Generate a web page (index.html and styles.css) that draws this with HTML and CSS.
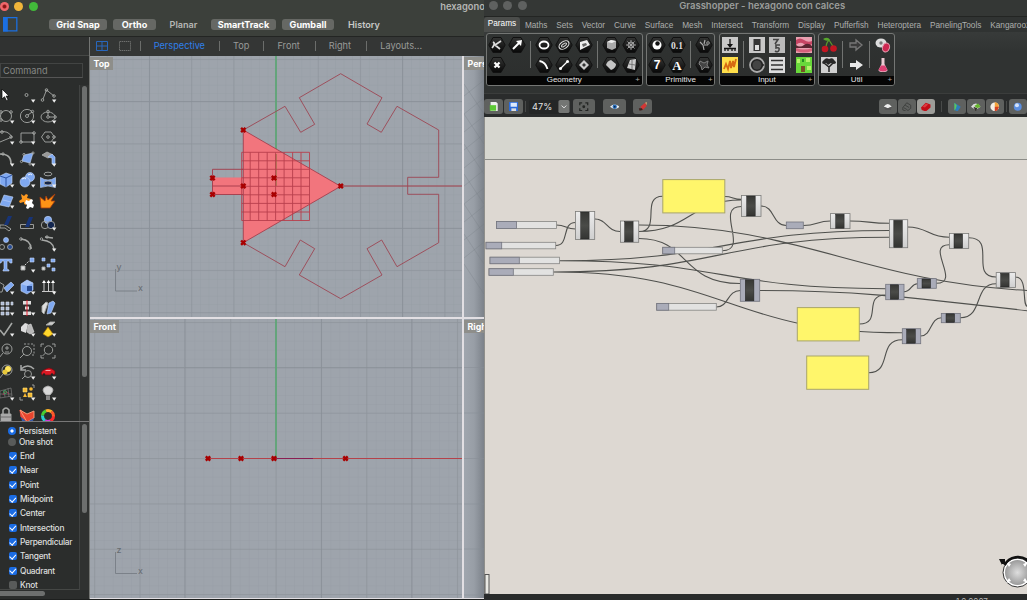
FILE: index.html
```
<!DOCTYPE html>
<html lang="en">
<head>
<meta charset="utf-8">
<title>hexagono con calces</title>
<link rel="stylesheet" href="styles.css">
</head>
<body>
<svg class="defs" width="0" height="0">
  <defs>
    <symbol id="fly" viewBox="0 0 22 21"><path d="M15 14.6h4.4l-2.2 3.2z" fill="#eee" stroke="none"/></symbol>
    <symbol id="x" viewBox="-4 -4 8 8"><path d="M-2.2-2.2 2.2 2.2M2.2-2.2-2.2 2.2" stroke="#a80000" stroke-width="2.4"/></symbol>
    <linearGradient id="hexfill" x1="0" y1="0" x2="0" y2="1"><stop offset="0" stop-color="#343534"/><stop offset="1" stop-color="#080808"/></linearGradient>
    <symbol id="hex" viewBox="0 0 20 20"><path d="M6 2.5h8l4.2 7.5-4.2 7.5H6L1.8 10z" fill="url(#hexfill)" stroke="#111" stroke-width="1"/></symbol>
    <pattern id="minorT" x="276" y="186" width="8.44" height="8.44" patternUnits="userSpaceOnUse"><path d="M0 0H9M0 0V9" stroke="#8b929a" stroke-width=".7" opacity=".5"/></pattern>
    <pattern id="majorT" x="275.5" y="185.5" width="42.2" height="42.2" patternUnits="userSpaceOnUse"><path d="M0 .5H43M.5 0V43" stroke="#878d95" stroke-width=".8" opacity=".6"/></pattern>
    <pattern id="minorF" x="276" y="458.5" width="9.07" height="9.07" patternUnits="userSpaceOnUse"><path d="M0 0H10M0 0V10" stroke="#8b929a" stroke-width=".7" opacity=".5"/></pattern>
    <pattern id="majorF" x="275.5" y="458" width="45.35" height="45.35" patternUnits="userSpaceOnUse"><path d="M0 .5H46M.5 0V46" stroke="#878d95" stroke-width=".8" opacity=".6"/></pattern>
    <linearGradient id="side"><stop offset="0" stop-color="#a0a6ae"/><stop offset=".5" stop-color="#989ea6"/><stop offset="1" stop-color="#7c828a"/></linearGradient>
    <linearGradient id="comp" x1="0" y1="0" x2="0" y2="1"><stop offset="0" stop-color="#ececec"/><stop offset="1" stop-color="#cfcfcf"/></linearGradient>
    <linearGradient id="core" x1="0" y1="0" x2="0" y2="1"><stop offset="0" stop-color="#373835"/><stop offset=".5" stop-color="#4a4b48"/><stop offset="1" stop-color="#333432"/></linearGradient>
    <radialGradient id="ball"><stop offset="0" stop-color="#dedede"/><stop offset="1" stop-color="#9a9a9a"/></radialGradient>
  </defs>
</svg>
<div class="screen">
  <section class="rhino">
    <header class="rhino-head">
      <div class="titlebar">
        <i class="light red"></i><i class="light yellow"></i><i class="light green"></i>
        <span class="doc-title">hexagono con calces</span>
      </div>
      <div class="snapbar">
        <svg class="panel-toggle" viewBox="0 0 15 15"><path d="M.7.7h13.6v13.6H.7z" fill="none" stroke="#1b6fe0" stroke-width="1.3"/><path d="M0 0h5v15H0z" fill="#1b6fe0"/></svg>
        <span class="snap on w58">Grid Snap</span><span class="snap on w43">Ortho</span><span class="snap w43">Planar</span><span class="snap on w65">SmartTrack</span><span class="snap on w52">Gumball</span><span class="snap w48 bright">History</span>
      </div>
    </header>
    <div class="rhino-body">
      <aside class="sidebar">
        <div class="side-top"></div>
        <div class="command">Command</div>
        <div class="tools-wrap">
          <div class="tools">
            <svg viewBox="0 0 22 21"><path d="M7 4v10l2.500-2.300 2 4 1.600-.8-2-3.800H14z" fill="#fff" stroke="#000" stroke-width=".7"/></svg>
            <svg viewBox="0 0 22 21"><circle cx="10.500" cy="10" r="1.500"/><use href="#fly"/></svg>
            <svg viewBox="0 0 22 21"><path d="M6 14 9.500 5 17 11"/><circle cx="5.500" cy="15" r="1.300"/><circle cx="9.500" cy="5" r="1.300"/><circle cx="17" cy="11" r="1.300"/><use href="#fly"/></svg>

            <svg viewBox="0 0 22 21"><circle cx="11" cy="10" r="5.500"/><circle cx="6" cy="6" r="1.300"/><circle cx="16" cy="6" r="1.300"/><circle cx="6" cy="14" r="1.300"/><use href="#fly"/></svg>
            <svg viewBox="0 0 22 21"><circle cx="11" cy="10" r="6.600"/><circle cx="11" cy="10" r="1.500"/><path d="m12 9 4-3"/><circle cx="16.500" cy="5.500" r="1.200"/><use href="#fly"/></svg>
            <svg viewBox="0 0 22 21"><ellipse cx="11" cy="11" rx="7" ry="5"/><circle cx="11" cy="11" r="1.300"/><circle cx="11" cy="5.500" r="1.300"/><circle cx="18" cy="11" r="1.300"/><path d="M11 7v3m1 1h4"/><use href="#fly"/></svg>

            <svg viewBox="0 0 22 21"><path d="M5 5q8-2 12 5l-12 5"/><circle cx="7" cy="5" r="1.300"/><circle cx="16" cy="10" r="1.300"/><use href="#fly"/></svg>
            <svg viewBox="0 0 22 21"><path d="M5 6h13v9H5z"/><circle cx="5" cy="15" r="1.300"/><circle cx="18" cy="6" r="1.300"/><use href="#fly"/></svg>
            <svg viewBox="0 0 22 21"><path d="M8 5h6l3.500 5-3.500 5H8l-3.500-5z"/><circle cx="11" cy="10" r="1.300"/><circle cx="17" cy="10" r="1.300"/><use href="#fly"/></svg>

            <svg viewBox="0 0 22 21"><path d="M4 5c9 0 12 3 12 10" stroke-width="1.700"/><circle cx="8" cy="5" r="1.200"/><use href="#fly"/></svg>
            <svg viewBox="0 0 22 21"><path class="bl" d="m8 6 9-2-3 10-8-2z"/><circle cx="8" cy="5.500" r="1.100"/><circle cx="17" cy="4" r="1.100"/><circle cx="5.500" cy="12.500" r="1.100"/><circle cx="14" cy="15" r="1.100"/><use href="#fly"/></svg>
            <svg viewBox="0 0 22 21"><path d="m5 6 5-3 6 3-5 3z" fill="#999"/><path class="bl" d="m11 8 4-3 3 3v8l-3-1V9z"/><use href="#fly"/></svg>

            <svg viewBox="0 0 22 21"><path class="bl" d="m5 6 6-3 6 2v8l-6 4-6-3z"/><path d="m5 6 6 2 6-3m-6 3v9" stroke="#234a9c"/><use href="#fly"/></svg>
            <svg viewBox="0 0 22 21"><circle class="bl" cx="14" cy="7" r="4.500"/><circle class="bl" cx="9" cy="12" r="5"/><path d="M6 9q3-2 4 0M12 5q3-2 4 0" stroke="#fff"/><use href="#fly"/></svg>
            <svg viewBox="0 0 22 21"><path class="bl" d="M3.500 7.500q7.500 5 15 0v10q-7.500-3-15 0z"/><ellipse cx="11" cy="4" rx="4" ry="1.800"/><ellipse cx="11" cy="13" rx="4" ry="2" fill="#15254b"/><use href="#fly"/></svg>

            <svg viewBox="0 0 22 21"><path class="bl" d="m9 4 9 2-4 10-9-2z"/><path d="m8 9 8 2" stroke="#a9c4f6"/><use href="#fly"/></svg>
            <svg viewBox="0 0 22 21"><path d="m5 3 3 2 2-2 2 1-1 3 4 1-1 2-3 1-1 3-2-1v-2l-4 1-1-2 3-2z" fill="#ff9a20" stroke="none"/><path d="m10 9 3 1 2-2 2 1-1 3 2 2-1 3-3-1-2 2-2-1 1-3-2-2z" fill="#fff" stroke="none"/></svg>
            <svg viewBox="0 0 22 21"><path d="m3 6 5 4 1-5 2 4 7-6-4 7h4l-5 7H4z" fill="#ff9316" stroke="#a53a0c" stroke-width=".8"/></svg>

            <svg viewBox="0 0 22 21"><path d="M5 12h5l6 4-2 2-4-3H5z"/><path d="M13 3h4l-4 9h-4z" fill="#173477" stroke="none"/></svg>
            <svg viewBox="0 0 22 21"><path d="M4.500 11.500h13v4h-13z"/><path d="M13 4h4l-4 10H9z" fill="#173477" stroke="none"/></svg>
            <svg viewBox="0 0 22 21"><circle class="bl" cx="11" cy="7" r="3.700"/><circle cx="8" cy="12" r="3.700"/><circle cx="14" cy="12" r="3.700" fill="#13264f"/><use href="#fly"/></svg>

            <svg viewBox="0 0 22 21"><circle class="bl" cx="11" cy="6" r="2.500"/><circle cx="7" cy="13" r="2.500"/><circle cx="15" cy="13" r="2.500" fill="#254a94"/></svg>
            <svg viewBox="0 0 22 21"><path d="M5 5q10 1 10 10" stroke-width="1.600"/><circle cx="5" cy="5" r="1.300"/><circle cx="14" cy="14" r="1.300"/></svg>
            <svg viewBox="0 0 22 21"><path d="M5 6q11 1 12 9M8 3l8 1" stroke-width="1.400"/><circle cx="4.500" cy="5" r="1.200"/><circle cx="10" cy="3" r="1.200"/><use href="#fly"/></svg>

            <svg viewBox="0 0 22 21"><path class="bl" d="M4 4h13v4h-2l-1-2h-2v8l2 1v1H8v-1l1-1V6H7L6 8H4z"/></svg>
            <svg viewBox="0 0 22 21"><path d="M5 11h4v4H5z" fill="#ddd"/><path class="bl" d="M14 3h4v4h-4z"/><path d="m9 10 4-4" stroke="#ddd" stroke-dasharray="1.500 1"/><use href="#fly"/></svg>
            <svg viewBox="0 0 22 21"><path class="bl" d="M5 3h3v3H5zm9 1h4v3h-4zm-4 5h3v3h-3zm5 4h3v3h-3z"/><path d="M5 12h3v3H5z" fill="#ddd"/></svg>

            <svg viewBox="0 0 22 21"><path class="bl" d="m9 11 7-6 3 3-7 7z"/><path d="M4 5l5 3-2 7H4"/><use href="#fly"/></svg>
            <svg viewBox="0 0 22 21"><path class="bl" d="m5 7 6-4 6 3v7l-6 4-6-3z"/><path d="m5 7 6-4 6 3-6 3z" fill="#a9c4f6" stroke="none"/><path d="M11 9h5v5h-5z" fill="#26488f" stroke="none"/><use href="#fly"/></svg>
            <svg viewBox="0 0 22 21"><path d="M5 14.500h13M7 14V5m4.500 9V5M16 14V5" stroke="#ddd"/><path d="m5 6 2-3 2 3zm4.500 0 2-3 2 3zM14 6l2-3 2 3z" fill="#fff" stroke="none"/><use href="#fly"/></svg>

            <svg viewBox="0 0 22 21"><path d="M6 4h3v3H6zm5 0h3v3h-3zm5 0h2v3h-2zM6 9h3v3H6zm5 0h3v3h-3zm-5 5h3v3H6zm5 0h3v3h-3z" fill="#a9b7d2" stroke="#dbe2ee" stroke-width=".6"/><use href="#fly"/></svg>
            <svg viewBox="0 0 22 21"><path d="M7 3h8v3.500H7zm0 10.500h8V17H7zM9 8.500h4v3H9z" fill="#ddd" stroke="none"/><path d="M11 2v16" stroke="#e12"/><use href="#fly"/></svg>
            <svg viewBox="0 0 22 21"><path d="M5 8 9 4l2 1-4 11-2-2z" fill="#ddd"/><path class="bl" d="m12 5 4-2 2 2-4 10-4 1z"/><use href="#fly"/></svg>

            <svg viewBox="0 0 22 21"><path d="m5 11 4 5 8-12" stroke-width="1.600"/><use href="#fly"/></svg>
            <svg viewBox="0 0 22 21"><path d="m5 8 4-4 3 1-2 9-5-2z" fill="#ddd" stroke="none"/><path d="m12 6 3-1 3 8-4 2-3-2z" fill="#b8b8b8" stroke="#ddd" stroke-width=".6"/><use href="#fly"/></svg>
            <svg viewBox="0 0 22 21"><path d="m11 8 5 7-5 3-5-3z" fill="#ffd72c" stroke="#b27b05" stroke-width=".7"/><path d="m9 6 4-3 5 0-3 3z" fill="#ccc"/><use href="#fly"/></svg>

            <svg viewBox="0 0 22 21"><circle cx="12" cy="8" r="5"/><path d="M10 7h4m-2-2v4m-2 2h4m-6 1-4 5"/></svg>
            <svg viewBox="0 0 22 21"><path d="M8 3h10v11h-2" stroke-dasharray="2 1.500"/><circle cx="11" cy="10" r="4.500"/><path d="m8 13-4 4"/></svg>
            <svg viewBox="0 0 22 21"><path d="M4 6V3h3m8 0h3v3m0 8v3h-3M7 17H4v-3"/><circle cx="11.500" cy="9" r="4.200"/><path d="m8.500 12-3 3"/></svg>

            <svg viewBox="0 0 22 21"><circle cx="12" cy="8" r="5"/><circle cx="13" cy="7" r="3" fill="#ffe45c" stroke="none"/><circle cx="10" cy="10" r="2.500" fill="#e7c83b" stroke="none"/><path d="m8 12-4 5"/></svg>
            <svg viewBox="0 0 22 21"><path d="M5 7q7-6 13 0M5 3v5h5" stroke-width="1.500"/><circle cx="12" cy="12" r="3.500"/><path d="m9 14-3 3"/><use href="#fly"/></svg>
            <svg viewBox="0 0 22 21"><path d="M4 11q1-3 5-4 3-2 6 0l3 2v3l-2 1H5z" fill="#dc1924" stroke="#6b0810" stroke-width=".7"/><path d="M9 8h4l1 1H8z" fill="#f4a6aa" stroke="none"/><circle cx="7" cy="12.500" r="1.200" fill="#222" stroke="none"/><circle cx="15" cy="12.500" r="1.200" fill="#222" stroke="none"/><use href="#fly"/></svg>

            <svg viewBox="0 0 22 21"><path d="m5 8 11-3 1 8-12 2zM5 11h12m-8-4 1 7m3-9 1 9" stroke-width=".6" stroke="#888"/><path d="M8 12q2-6 6-1" stroke="#b13858"/><circle cx="10" cy="9" r="1.500" stroke="#3aa55c"/><use href="#fly"/></svg>
            <svg viewBox="0 0 22 21"><path d="M7 5h4v4H7zm5 5h4v4h-4z" fill="#f7b831" stroke="#ffe27b" stroke-width=".6"/><circle cx="15" cy="6" r="1.800" fill="#f7b831" stroke="none"/><path d="m9 10 2 4H7z" fill="#f7b831" stroke="none"/><path d="M18 5V2h-2M4 14v3h3"/><use href="#fly"/></svg>
            <svg viewBox="0 0 22 21"><path d="M9 12q-3-3-3-5 0-3 5-4 5 1 5 4 0 2-3 5z" fill="#d9d9d9" stroke="#aaa"/><path d="M9 13h4v4H9z" fill="#888" stroke="none"/><use href="#fly"/></svg>

            <svg viewBox="0 0 22 21"><path d="M6 9h10v8H6z" fill="#aaa"/><path d="M8 9V5q3-4 6 0v4" stroke-width="1.500"/><path d="M6 12h10" stroke="#666"/></svg>
            <svg viewBox="0 0 22 21"><path d="m4 5 7 5v7l-6-5z" fill="#ef493b" stroke="#ef493b"/><path d="m4 5 7 4 7-3v7l-7 4z" fill="#e8452f" stroke="#f8a47d"/><path d="m5 12 6 5 7-4-1 3-6 3-5-3z" fill="#3659a8" stroke="none"/></svg>
            <svg viewBox="0 0 22 21"><circle cx="11" cy="11" r="5.500" stroke="#ff2b2b" stroke-width="3" stroke-dasharray="5.800 28.800"/><circle cx="11" cy="11" r="5.500" stroke="#d23bd8" stroke-width="3" stroke-dasharray="5.800 28.800" stroke-dashoffset="-5.800"/><circle cx="11" cy="11" r="5.500" stroke="#28d0d0" stroke-width="3" stroke-dasharray="5.800 28.800" stroke-dashoffset="-11.600"/><circle cx="11" cy="11" r="5.500" stroke="#46cf32" stroke-width="3" stroke-dasharray="5.800 28.800" stroke-dashoffset="-17.400"/><circle cx="11" cy="11" r="5.500" stroke="#ffb02a" stroke-width="3" stroke-dasharray="5.800 28.800" stroke-dashoffset="-23.200"/><circle cx="11" cy="11" r="5.500" stroke="#ff5a2b" stroke-width="3" stroke-dasharray="5.800 28.800" stroke-dashoffset="-29"/></svg>
          </div>
          <div class="track"><i class="thumb tall"></i></div>
        </div>
        <div class="osnap-wrap">
          <div class="osnap">
            <label class="opt radio"><i class="dot sel"></i>Persistent</label>
            <label class="opt radio"><i class="dot"></i>One shot</label>
            <label class="opt"><i class="box"></i>End</label>
            <label class="opt"><i class="box"></i>Near</label>
            <label class="opt"><i class="box"></i>Point</label>
            <label class="opt"><i class="box"></i>Midpoint</label>
            <label class="opt"><i class="box"></i>Center</label>
            <label class="opt"><i class="box"></i>Intersection</label>
            <label class="opt"><i class="box"></i>Perpendicular</label>
            <label class="opt"><i class="box"></i>Tangent</label>
            <label class="opt"><i class="box"></i>Quadrant</label>
            <label class="opt"><i class="box off"></i>Knot</label>
          </div>
          <div class="track"><i class="thumb short"></i></div>
        </div>
        <div class="hscroll"><i></i></div>
      </aside>
      <div class="views">
        <nav class="view-tabs">
          <svg class="lay" viewBox="0 0 12 10"><path d="M.5.5h11v9H.5zM6 0v10M0 5h12" fill="none" stroke="#2867bd"/></svg>
          <svg class="lay" viewBox="0 0 12 10"><path d="M.5.5h11v9H.5z" fill="none" stroke="#6d6e6d" stroke-dasharray="1.500 .6"/></svg>
          <b></b><span class="act t1">Perspective</span><b></b><span class="t2">Top</span><b></b><span class="t3">Front</span><b></b><span class="t4">Right</span><b></b><span class="t5">Layouts...</span>
        </nav>
        <div class="ports">
          <div class="port">
            <svg viewBox="90 56 372 261">
              <rect x="90" y="56" width="372" height="261" fill="#9ea4ac"/>
              <rect x="90" y="56" width="372" height="261" fill="url(#minorT)"/>
              <rect x="90" y="56" width="372" height="261" fill="url(#majorT)"/>
              <path d="M149.500 56v261M402.500 56v261M90 101.500h372M90 228.500h372" stroke="#7f868e" opacity=".3"/>
              <path d="M276 56v130" stroke="#5fa577" stroke-width="1.800"/>
              <path d="M276 186h186" stroke="#a5414c"/>
              <path d="m243.300 130 97.400 56.300-97.400 56.400v-48.200h-30.800v-17h30.800z" fill="#f2757d"/>
              <path d="M276 154v32" stroke="#7a7a35"/>
              <path d="M241.700 152.300h67.800v68.200h-67.800zM250.200 152.300v68.200M258.700 152.300v68.200M267.200 152.300v68.200M275.600 152.300v68.200M284.100 152.300v68.200M292.600 152.300v68.200M301 152.300v68.200M241.700 160.800h67.800M241.700 169.300h67.800M241.700 177.800h67.800M241.700 186.300h67.800M241.700 194.800h67.800M241.700 203.400h67.800M241.700 212h67.800" class="thin" stroke="#b8404d"/>
              <path d="M243 169.300h-30.500v25.200H243M212.500 186H243" class="thin" stroke="#a33b49"/>
              <path d="m243.300 130 97.400 56.300-97.400 56.400z" class="thin" stroke="#a6404e"/>
              <path d="M243.300 130 285 106.300l15.700 26 14-8-15.400-26.600 41.400-24 41.300 24L367 124l14.300 8.300 15.700-26 41.700 23.700v47.300h-31v17h31v48.400l-41.700 24-15.300-26.700-14.700 8.700 15 26.300-41.300 23.700-41.400-23.700 15.400-26.300-14.400-8.700-15.300 26.700-41.700-24" class="thin" stroke="#9d4654"/>
              <path d="M115.500 269v22H137" class="thin" stroke="#777d84"/>
              <text x="116.500" y="269.500" class="axis">y</text><text x="138" y="291" class="axis">x</text>
              <use href="#x" x="239.300" y="126" width="8" height="8"/><use href="#x" x="239.300" y="238.700" width="8" height="8"/><use href="#x" x="208.500" y="174" width="8" height="8"/><use href="#x" x="208.500" y="190.500" width="8" height="8"/><use href="#x" x="239.300" y="182" width="8" height="8"/><use href="#x" x="270" y="174" width="8" height="8"/><use href="#x" x="270" y="190.500" width="8" height="8"/><use href="#x" x="336.700" y="182" width="8" height="8"/>
            </svg>
            <span class="vlabel">Top</span>
          </div>
          <div class="port">
            <svg viewBox="464 56 20 261"><rect x="464" y="56" width="20" height="261" fill="url(#side)"/><path d="m464 96 20-16m-20 34 20-16m-20 34 20-16m-20 34 20-16m-20 34 20-16m-20 34 20-16m-20 34 20-16m-20 34 20-16m-20 34 20-16m-20 34 20-16M464 84l20 30m-20 0 20 30m-20 0 20 30m-20 0 20 30m-20 0 20 30m-20 0 20 30m-20 0 20 30" stroke="#777d84" stroke-width=".5" fill="none" opacity=".6"/></svg>
            <span class="vlabel">Perspective</span>
          </div>
          <div class="port">
            <svg viewBox="90 319 372 279">
              <rect x="90" y="319" width="372" height="279" fill="#9ea4ac"/>
              <rect x="90" y="319" width="372" height="279" fill="url(#minorF)"/>
              <rect x="90" y="319" width="372" height="279" fill="url(#majorF)"/>
              <path d="M184.500 319v279M321.500 319v279M411.500 319v279M90 367.500h372" stroke="#7f868e" opacity=".3"/>
              <path d="M276 319v139" stroke="#5fa577" stroke-width="1.800"/>
              <path d="M208 458.500h254" stroke="#b4424a"/><path d="M276 458.500h37" stroke="#8a1f52"/>
              <path d="M115.500 552v21.500H137" class="thin" stroke="#777d84"/>
              <text x="116.500" y="552.500" class="axis">z</text><text x="138" y="574" class="axis">x</text>
              <use href="#x" x="204" y="454.500" width="8" height="8"/><use href="#x" x="237" y="454.500" width="8" height="8"/><use href="#x" x="270" y="454.500" width="8" height="8"/><use href="#x" x="341.500" y="454.500" width="8" height="8"/>
            </svg>
            <span class="vlabel">Front</span>
          </div>
          <div class="port">
            <svg viewBox="464 319 20 279"><rect x="464" y="319" width="20" height="279" fill="url(#side)"/><path d="M464 367.500h20M464 413h20M464 458.500h20M464 504h20M464 549h20M464 595h20" stroke="#878d95" stroke-width=".5"/></svg>
            <span class="vlabel">Right</span>
          </div>
        </div>
      </div>
    </div>
  </section>

  <section class="gh">
    <header class="gh-title"><i></i><i></i><i></i><span>Grasshopper - hexagono con calces</span></header>
    <nav class="gh-tabs">
      <span class="cur">Params</span><span>Maths</span><span>Sets</span><span>Vector</span><span>Curve</span><span>Surface</span><span>Mesh</span><span>Intersect</span><span>Transform</span><span>Display</span><span>Pufferfish</span><span>Heteroptera</span><span>PanelingTools</span><span>Kangaroo2</span>
    </nav>
    <div class="ribbon">
      <div class="group">
        <div class="cells">
          <div class="col">
            <svg viewBox="0 0 20 20"><use href="#hex"/><path d="m14 6-6 4m0 0 5 4M6 7q2 1 1 3t-2 3" stroke="#ddd" stroke-width="1.700"/></svg>
            <svg viewBox="0 0 20 20"><use href="#hex"/><path d="m7.500 7.500 5 5m0-5-5 5" stroke="#fff" stroke-width="2.200"/></svg>
          </div>
          <div class="col">
            <svg viewBox="0 0 20 20"><use href="#hex"/><path d="m6 14 6-6" stroke="#fff" stroke-width="2"/><path d="m9 6 6-1-1 6z" fill="#fff"/></svg>
          </div>
          <hr>
          <div class="col">
            <svg viewBox="0 0 20 20"><use href="#hex"/><ellipse cx="10" cy="10" rx="4.500" ry="3.500" stroke="#fff" stroke-width="1.800"/></svg>
            <svg viewBox="0 0 20 20"><use href="#hex"/><path d="M5.500 6q6 1 8 8" stroke="#fff" stroke-width="1.800"/></svg>
          </div>
          <div class="col">
            <svg viewBox="0 0 20 20"><use href="#hex"/><ellipse cx="10" cy="10" rx="5.500" ry="3.500" transform="rotate(-35 10 10)" stroke="#ddd" stroke-width="1.200"/><ellipse cx="10" cy="10" rx="3" ry="1.200" transform="rotate(-35 10 10)" stroke="#ccc"/></svg>
            <svg viewBox="0 0 20 20"><use href="#hex"/><path d="m7 13 6-6" stroke="#fff" stroke-width="1.300"/><circle cx="6.500" cy="13.500" r="1.500" fill="#fff"/><circle cx="13.500" cy="6.500" r="1.500" fill="#fff"/></svg>
          </div>
          <div class="col">
            <svg viewBox="0 0 20 20"><use href="#hex"/><path d="m6 7 7-2 3 5-10 5z" fill="#eee"/><path d="m8 9 4-1 1 2-4 2z" fill="#666"/></svg>
            <svg viewBox="0 0 20 20"><use href="#hex"/><path d="m10 5 5 5-5 5-5-5z" fill="#ccc"/><path d="m10 8 2 2-2 2-2-2z" fill="#333"/></svg>
          </div>
          <hr>
          <div class="col">
            <svg viewBox="0 0 20 20"><use href="#hex"/><path d="m6 7 4-2 5 1v7l-4 2-5-2z" fill="#aaa"/><path d="m6 7 4-2 5 1-4 2z" fill="#eee"/></svg>
            <svg viewBox="0 0 20 20"><use href="#hex"/><path d="M5 10q1-4 5-5l5 4q0 4-5 6z" fill="#c5c5c5"/></svg>
          </div>
          <div class="col">
            <svg viewBox="0 0 20 20"><use href="#hex"/><path d="M10 5v10m-5-5h10M6.500 6.500l7 7m0-7-7 7" stroke="#aaa" stroke-width=".9"/><circle cx="10" cy="10" r="3" stroke="#999"/></svg>
            <svg viewBox="0 0 20 20"><use href="#hex"/><path d="m9 5 6-1-1 11-8-2z" fill="#ccc"/><path d="m8 9 6 1m-3-5v9" stroke="#777"/></svg>
          </div>
        </div>
        <div class="cap"><span>Geometry</span><em>+</em></div>
      </div>
      <div class="group">
        <div class="cells">
          <div class="col">
            <svg viewBox="0 0 20 20"><use href="#hex"/><circle cx="10" cy="10" r="4.500" fill="#fff"/><circle cx="10.500" cy="8.500" r="2.200" fill="#111"/></svg>
            <svg viewBox="0 0 20 20"><use href="#hex"/><text x="10" y="14.300" class="g7">7</text></svg>
          </div>
          <div class="col">
            <svg viewBox="0 0 20 20"><use href="#hex"/><text x="10" y="13.500" class="g01">0.1</text></svg>
            <svg viewBox="0 0 20 20"><use href="#hex"/><text x="10" y="14.500" class="gA">A</text></svg>
          </div>
          <hr>
          <div class="col">
            <svg viewBox="0 0 20 20"><use href="#hex"/><path d="m6 7 3 3 1 5m0-6 1-4m-1 5 4 0" stroke="#aaa" stroke-width="1.200"/><circle cx="14" cy="8" r="1.300" stroke="#999"/></svg>
            <svg viewBox="0 0 20 20"><use href="#hex"/><path d="m6 6 4 2 4-2-1 4 2 3-4-1-3 3-1-4-2-2z" fill="#444" stroke="#888" stroke-width=".9"/></svg>
          </div>
        </div>
        <div class="cap"><span>Primitive</span><em>+</em></div>
      </div>
      <div class="group">
        <div class="cells">
          <div class="col">
            <svg viewBox="0 0 20 20"><rect x="2" y="2" width="16" height="16" fill="#c8c8c8"/><path d="M10 4v7M4 13.500h12M5 13v3m3-3v3m4-3v3m3-3v3" stroke="#111" stroke-width="1.300"/><path d="M7 9h6l-3 4z" fill="#111"/></svg>
            <svg viewBox="0 0 20 20"><rect x="2" y="2" width="16" height="16" fill="#ffdf4a"/><path d="m4 14 2-5 2 5 2-8 1 7 2-7 1 6 2-8" stroke="#d76b12" stroke-width="1.800"/></svg>
          </div>
          <hr>
          <div class="col">
            <svg viewBox="0 0 20 20"><rect x="2" y="2" width="16" height="16" fill="#c8c8c8"/><rect x="6.500" y="4" width="7" height="12" fill="#333"/><rect x="8" y="10" width="4" height="5" fill="#ddd"/></svg>
            <svg viewBox="0 0 20 20"><circle cx="10" cy="10" r="7" fill="#222" stroke="#aaa" stroke-width="1.800"/><circle cx="10" cy="10" r="4.500" fill="#444"/><path d="M15 8.500 18 10l-3 1.500z" fill="#222"/></svg>
          </div>
          <div class="col">
            <svg viewBox="0 0 20 20"><rect x="2" y="2" width="16" height="16" fill="#bbb"/><path d="M6 4.500h5L8 9m5 1H9v3q4-1 3 2t-4 1" stroke="#444" stroke-width="1.600"/></svg>
            <svg viewBox="0 0 20 20"><rect x="2" y="2" width="16" height="16" fill="#ddd"/><path d="M4 5.500h12M4 10h12M4 14.500h12" stroke="#333" stroke-width="1.600"/></svg>
          </div>
          <hr>
          <div class="col">
            <svg viewBox="0 0 20 20"><rect x="2" y="2" width="16" height="16" fill="#e8a0b0"/><path d="M2 5q4-3 8 0t8 1v3q-4 3-8 0t-8 1z" fill="#c74564"/><path d="M2 10q4 3 8 0t8 1v2H2z" fill="#5b2531"/><path d="M2 13q8 3 16 0v3q-8 3-16 0z" fill="#d6607b"/></svg>
            <svg viewBox="0 0 20 20"><rect x="2" y="2" width="16" height="16" fill="#69d83b"/><path d="M3 4h3v4H3zm9-1h4v4h-4zm1 8h4v4h-4z" fill="#b4f36b"/><path d="M7 11h4v6H7z" fill="#765226"/><path d="M8 4h2v3H8z" fill="#258f23"/></svg>
          </div>
        </div>
        <div class="cap"><span>Input</span><em>+</em></div>
      </div>
      <div class="group">
        <div class="cells">
          <div class="col">
            <svg viewBox="0 0 20 20"><path d="M7 13q0-5 3-8l5 8" stroke="#57962c" stroke-width="1.300"/><path d="M4 4q5-3 7 1-4 2-7-1z" fill="#57a62c"/><circle cx="6" cy="14" r="3.300" fill="#c31622"/><circle cx="14.500" cy="13.500" r="3.300" fill="#c31622"/></svg>
            <svg viewBox="0 0 20 20"><rect x="2" y="2" width="16" height="16" fill="#d0d0d0"/><path d="M10 17v-6m-5-3 5 4 5-5" stroke="#222" stroke-width="1.500"/><path d="M4 9q-2-2 1-4 2-3 5-1 4-2 5 1 4 3 0 4l-3-1-3 2-2-2z" fill="#282828"/></svg>
          </div>
          <hr>
          <div class="col">
            <svg viewBox="0 0 20 20"><path d="M4 8h6V5l6 5-6 5v-3H4z" stroke="#777" stroke-width="1.300" fill="#3b3b3b"/></svg>
            <svg viewBox="0 0 20 20"><path d="M4 8h6V5l7 5-7 5v-3H4z" fill="#e8e8e8"/></svg>
          </div>
          <hr>
          <div class="col">
            <svg viewBox="0 0 20 20"><ellipse cx="8" cy="8" rx="5.500" ry="4.500" fill="#ddd"/><circle cx="8" cy="8" r="1.700" fill="#777"/><ellipse cx="13" cy="12.500" rx="3.500" ry="4.500" transform="rotate(20 13 12.500)" fill="#cd2851" stroke="#e3a2b1"/></svg>
            <svg viewBox="0 0 20 20"><path d="M8.500 3h3v6l3 6q0 2-4.500 2t-4.500-2l3-6z" fill="#eacbd3"/><path d="M8 10.500h4l2.500 4.500q-4.500 3-9 0z" fill="#dc3f72"/></svg>
          </div>
        </div>
        <div class="cap"><span>Util</span><em>+</em></div>
      </div>
    </div>
    <div class="gh-tools">
      <span class="btn w19"><svg viewBox="0 0 12 12"><path d="M2 0h7l2 2v10H2z" fill="#eee"/><path d="M1 4h8v7H1z" fill="#5dc936"/></svg></span>
      <span class="btn w19"><svg viewBox="0 0 12 12"><path d="M0 0h12v12H1l-1-1z" fill="#2b6bd9"/><path d="M2 1h8v5H2z" fill="#dce9fb"/><path d="M3 8h6v4H3z" fill="#ddd"/></svg></span>
      <s></s>
      <span class="zoom">47%<svg viewBox="0 0 12 14"><rect width="12" height="14" rx="2" fill="#747674"/><path d="m3.500 6 2.500 2.500L8.500 6" fill="none" stroke="#eee"/></svg></span>
      <span class="btn w23"><svg viewBox="0 0 12 12"><path d="M1 4V1h3m4 0h3v3m0 4v3H8M4 11H1V8" fill="none" stroke="#242624" stroke-width="1.600"/><circle cx="6" cy="6" r="1.800" fill="#242624"/></svg></span>
      <span class="btn w23 m8"><svg viewBox="0 0 12 12"><path d="M0 6q6-6 12 0-6 5-12 0z" fill="#e5edf5"/><circle cx="6" cy="6" r="2.700" fill="#266cb8"/><circle cx="6" cy="6" r="1.100" fill="#082040"/></svg></span>
      <span class="btn w19 m7"><svg viewBox="0 0 12 12"><path d="m3 6 6-5 2 4-5 5z" fill="#d33735"/><path d="m9 1 2-1v4z" fill="#e8b06e"/><path d="M1 8h4l1 2-4 1z" fill="#43201d"/></svg></span>
      <div class="right">
        <span class="btn w18"><svg viewBox="0 0 12 12"><path d="M1 6q5-7 10 0l-5 2z" fill="#eee"/><path d="m1 6 5 2 5-2-1 4H3z" fill="#555"/></svg></span>
        <span class="btn w18"><svg viewBox="0 0 12 12"><path d="m1 7 5-6 5 3v4l-5 4-5-2zM2 7l5 3m-3-6 5 3" fill="none" stroke="#3b3d3b" stroke-width="1.100"/></svg></span>
        <span class="btn w18 hot"><svg viewBox="0 0 12 12"><path d="m0 7 6-6 6 2v4l-6 5-5-2z" fill="#c20e18"/><path d="m2 6 4-4 3 1-4 4z" fill="#dd3a40"/></svg></span>
        <s class="far"></s>
        <span class="btn w18"><svg viewBox="0 0 12 12"><path d="m3 1 8 5-4 6-4-2z" fill="#2e7cba"/><path d="m3 1 3 3-1 4-2 3z" fill="#5dc45c"/></svg></span>
        <span class="btn w18"><svg viewBox="0 0 12 12"><path d="M0 6q6-8 12 0l-6 4z" fill="#ddd"/><path d="m4 5 5-3 3 4-4 2z" fill="#65b52e"/><path d="m3 6 5 2-2 4z" fill="#36322b"/></svg></span>
        <span class="btn w18"><svg viewBox="0 0 12 12"><circle cx="6" cy="6" r="5.500" fill="#f4efe5"/><path d="M6 0q6 1 5 7l-5-1z" fill="#f5a43b"/><path d="M6 6v5.500Q10 12 11.500 6z" fill="#d34222"/></svg></span>
        <s></s>
        <span class="btn w18"><svg viewBox="0 0 12 12"><circle cx="6" cy="6" r="5" fill="#5c8fe0"/><circle cx="5" cy="4" r="2.500" fill="#d3e2fa"/></svg></span>
      </div>
    </div>
    <svg class="canvas" viewBox="484 117 543 477">
      <rect x="484" y="117" width="543" height="477" fill="#ddd8d2"/>
      <rect x="484" y="117" width="543" height="42.500" fill="#d6d6cf"/>
      <path d="M485 159.500h542" stroke="#8c8d88"/>
      <path d="M484.500 117v477" stroke="#8f8f8b"/>
      <g class="wires">
        <path d="M556.500 225C566 225 566 229 575.500 229M555.700 245.500C570 245.500 561 222.500 575.500 222.500M595 219C607 219 607 231.500 620 231.500M639 225C800 225 860 281 1027 290.500M639 231.500C662 231.500 640 196.300 662.700 196.300M639 231.500C690 231.500 690 200 741 200M639 238.500C690 238.500 680 283.500 740 283.500M724.700 196.500C733 196.500 733 199.300 741 199.300M722.300 250.700C750 250.700 714 206.500 741.300 206.500"/>
        <path d="M559.500 260.700C724 260.700 724 230.500 889 230.500M553.300 272C721 272 721 237.300 889 237.300M559.500 260.700C722 260.700 722 288.700 885.700 288.700M553.300 272C727 272 727 332.700 902 332.700M760 290.500C850 290.500 900 296 1027 310.700M716.300 307C729 307 727 290.500 740.300 290.500M761 206C775 206 772 225.500 786.300 225.500M803.300 225.500C817 225.500 817 221 830.300 221M850 221C869 221 869 223.300 889.300 223.300M907.700 227C928 227 928 237.300 949.300 237.300"/>
        <path d="M968.700 237.700C997 237.700 969 277 996 277M936.300 283.300C962 283.300 924 244.700 949.300 244.700M1015.300 277C1029 277 1021 306.700 1028 306.700M904 291.700C911 291.700 911 283.700 917.300 283.700M859.300 324C883 324 862 295 885.700 295M960.300 317.700C984 317.700 973 283.700 996 283.700M920.700 336C932 336 930 317.700 941.300 317.700M868.700 372.700C893 372.700 877 339.700 902.300 339.700"/>
      </g>
      <g class="sl">
        <rect x="496.500" y="221.500" width="60" height="7"/><rect x="486" y="242.300" width="69.700" height="6.500"/><rect x="490" y="257.200" width="69.500" height="6.500"/><rect x="489" y="268.700" width="64.300" height="6.600"/><rect x="662.700" y="247.300" width="59.600" height="6.500"/><rect x="656.700" y="303.400" width="59.600" height="6.800"/>
      </g>
      <g class="vi">
        <rect x="496.500" y="221.500" width="20" height="7"/><rect x="486" y="242.300" width="15.700" height="6.500"/><rect x="490" y="257.200" width="29.300" height="6.500"/><rect x="489" y="268.700" width="24.300" height="6.600"/><rect x="662.700" y="247.300" width="12" height="6.500"/><rect x="656.700" y="303.400" width="12" height="6.800"/>
        <rect x="786.300" y="222" width="17" height="6.700"/>
        <rect x="740.300" y="279.300" width="19.400" height="22"/><rect x="885.700" y="284.300" width="18.300" height="15.400"/><rect x="917.300" y="278.600" width="19" height="9.700"/><rect x="941.300" y="313.400" width="19" height="9.300"/><rect x="902.300" y="328.700" width="18.400" height="15"/>
      </g>
      <g class="co">
        <rect x="575.400" y="211.400" width="19.300" height="28"/><rect x="620.400" y="221" width="18.300" height="21.300"/><rect x="741.400" y="195.400" width="19.600" height="21"/><rect x="830.400" y="213.600" width="19.600" height="15"/><rect x="889.400" y="219.700" width="18.300" height="28"/><rect x="949.400" y="233.400" width="19.300" height="15"/><rect x="996.200" y="272.600" width="19.300" height="14.800"/>
      </g>
      <g fill="url(#core)" stroke="#222" stroke-width=".5">
        <rect x="580.700" y="212" width="8.400" height="27"/><rect x="624.700" y="221.500" width="8.400" height="20.300"/><rect x="746.700" y="196" width="8.500" height="20"/><rect x="835.700" y="214.200" width="8.400" height="14"/><rect x="893.800" y="220.300" width="8.500" height="27"/><rect x="954" y="234" width="8.600" height="14"/><rect x="1000.700" y="273.200" width="8.400" height="13.800"/>
        <rect x="745.300" y="279.800" width="8.600" height="21"/><rect x="890.300" y="284.800" width="8.400" height="14.400"/><rect x="922" y="279" width="8.600" height="9"/><rect x="946" y="313.800" width="8.600" height="8.600"/><rect x="906.700" y="329.200" width="8.600" height="14"/>
      </g>
      <g fill="#fff66b" stroke="#a9a66a" stroke-width="1">
        <rect x="662.800" y="179.600" width="62" height="33.300"/><rect x="797.300" y="307.600" width="62" height="33.300"/><rect x="806.700" y="356" width="62" height="33.300"/>
      </g>
      <circle cx="1017.500" cy="572.500" r="14.500" fill="#fff" stroke="#333"/>
      <circle cx="1017.500" cy="572.500" r="12.500" fill="url(#ball)"/>
      <path d="m1006 562 5 2-2 3zm0 21 5-2-2-3zm22-21-5 2 2 3zm0 21-5-2 2-3z" fill="#fff"/>
      <path d="M1004.500 565a15.500 15.500 0 0 1 24-4" fill="none" stroke="#111" stroke-width="2.600"/>
      <path d="m999 559 6 0 0 5-3 0 0 1z" fill="#111"/>
      <rect x="485" y="574.500" width="4" height="19.500" fill="#e9e9e4" stroke="#555"/>
    </svg>
    <footer class="gh-status">1.0.0007</footer>
  </section>
</div>
</body>
</html>
```
FILE: styles.css
```
* { box-sizing: border-box; }
body { margin: 0; background: #fff; font-family: Inter, "Liberation Sans", sans-serif; }
.defs { display: block; position: absolute; }
.screen { display: flex; width: 1027px; height: 600px; overflow: hidden; background: #1d1f1e; }
svg { display: block; }

/* modelling window */
.rhino { width: 484px; flex: none; height: 598.5px; overflow: hidden; display: flex; flex-direction: column; background: #3b3d3a; }
.rhino-head { height: 37px; flex: none; background: #3c403b; border-bottom: 1px solid #232523; }
.titlebar { height: 12px; display: flex; align-items: center; gap: 5.4px; }
.light { width: 9px; height: 9px; border-radius: 50%; flex: none; }
.red { background: radial-gradient(#8a1414 20%, #f0676a 40%); }
.yellow { background: #f0b53a; }
.green { background: #42b93a; }
.doc-title { margin-left: 397px; white-space: nowrap; font-size: 9.4px; font-weight: 600; color: #b5b6b4; }
.snapbar { height: 25px; display: flex; align-items: center; padding-left: 3px; }
.panel-toggle { width: 14.5px; height: 14.5px; margin-right: 31.5px; }
.snap { height: 11.5px; border-radius: 3px; margin-right: 6px; display: grid; place-items: center; font-size: 9.1px; font-weight: 600; color: #b6b7b5; white-space: nowrap; }
.snap.on { background: #666864; color: #fff; font-weight: 700; }
.snap.bright { color: #c9cac8; }
.w58 { width: 58px; } .w43 { width: 43px; } .w65 { width: 65px; } .w52 { width: 52px; } .w48 { width: 48px; }
.rhino-body { flex: 1; display: flex; min-height: 0; }
.sidebar { width: 90px; flex: none; background: #2b2d2c; border-right: 1.500px solid #737573; display: flex; flex-direction: column; }
.side-top { height: 18.500px; background: #303231; border-bottom: 1px solid #454745; flex: none; }
.command { margin: 7px 6px 7px 0; height: 15px; width: 83px; border: 1px solid #424443; border-bottom-color: #555; padding-left: 2px; font-size: 9.200px; line-height: 13px; color: #858785; flex: none; }
.tools-wrap { display: flex; height: 337px; overflow: hidden; flex: none; border-bottom: 1px solid #777; }
.tools { width: 79px; height: 345px; overflow: hidden; display: grid; grid-template-columns: repeat(3, 21.4px); grid-auto-rows: 21.350px; justify-content: start; flex: none; }
.tools svg { width: 22px; height: 21px; margin-left: -5.5px; fill: none; stroke: #a6a8a6; stroke-width: .9; }
.tools .bl { fill: #7fa8f0; stroke: #c6d8f8; stroke-width: .6; }
.track { flex: 1; border-left: 1px solid #414342; background: #303231; display: flex; justify-content: center; }
.thumb { width: 5px; border-radius: 3px; background: #6d6f6e; }
.tall { height: 291px; margin-top: 1px; }
.short { height: 89px; margin-top: 2px; }
.osnap-wrap { display: flex; flex: 1; min-height: 0; overflow: hidden; }
.osnap { width: 79px; flex: none; padding: 4px 0 0 8px; overflow: hidden; border-bottom: 1px solid #454745; }
.opt { display: flex; align-items: center; height: 14.300px; gap: 3px; font-size: 8.300px; font-weight: 500; letter-spacing: -.25px; color: #dedfde; white-space: nowrap; }
.opt.radio { height: 11px; gap: 3px; }
.opt.radio + .opt:not(.radio) { margin-top: 1.500px; }
.dot { width: 8px; height: 8px; border-radius: 50%; background: #595b5a; }
.dot.sel { background: radial-gradient(#fff 22%, #1b6ce4 34%); }
.box { width: 8px; height: 8px; margin-left: 1px; border-radius: 2px; background: #1b6ce4; display: grid; place-items: center; }
.box::after { content: ""; width: 2.500px; height: 4.500px; border: solid #fff; border-width: 0 1.200px 1.200px 0; transform: rotate(42deg); margin-top: -1px; }
.box.off { background: #595b5a; } .box.off::after { border: 0; }
.hscroll { height: 9px; flex: none; padding-top: 1px; }
.hscroll i { display: block; width: 45px; height: 5.500px; border-radius: 0 3px 3px 0; background: #6d6f6e; }
.views { flex: 1; min-width: 0; display: flex; flex-direction: column; }
.view-tabs { height: 19px; flex: none; display: flex; align-items: center; padding-bottom: 2px; background: #343635; font-size: 9.200px; color: #989a98; white-space: nowrap; overflow: hidden; }
.lay { width: 12px; height: 10px; margin-left: 6px; flex: none; }
.lay + .lay { margin-left: 11px; margin-right: 8.500px; }
.view-tabs b { width: 1px; height: 10px; background: #6b6d6b; margin: 0 13.200px; flex: none; }
.view-tabs .lay + b { margin-left: 0; }
.view-tabs .act { color: #2f7fea; }
.t1, .t2, .t3, .t4 { flex: none; }
.t1 { width: 52px; } .t2 { width: 17px; } .t3 { width: 24px; } .t4 { width: 24px; }
.ports { flex: 1; display: grid; grid-template-columns: 372px 20px; grid-template-rows: 261px 279px; gap: 2px; background: #e2dfe3; min-height: 0; overflow: hidden; }
.port { display: grid; grid-template-columns: 100%; grid-template-rows: 100%; overflow: hidden; }
.port > * { grid-area: 1 / 1; }
.port svg { width: 100%; height: 100%; }
.vlabel { align-self: start; justify-self: start; height: 13px; padding: 0 3.500px; background: #8e8e8a; color: #fff; font-size: 8.800px; font-weight: 700; line-height: 14px; margin-top: 1px; }
.thin { fill: none; stroke-width: .9; }
.axis { font: 9px Inter, sans-serif; fill: #666b70; }

/* node editor window */
.gh { width: 543px; flex: none; height: 600px; display: flex; flex-direction: column; background: #2f3231; overflow: hidden; }
.gh-title { height: 16.500px; flex: none; background: #343735; display: flex; align-items: center; gap: 5.400px; padding: 0 0 5px 5px; border-bottom: 1px solid #232523; }
.gh-title i { width: 9px; height: 9px; border-radius: 50%; background: #5f6160; flex: none; }
.gh-title span { margin-left: 147px; font-size: 9.500px; font-weight: 600; color: #9b9d9b; white-space: nowrap; }
.gh-tabs { height: 15.500px; flex: none; display: flex; align-items: stretch; overflow: hidden; font: 8.250px/17px "Liberation Sans", sans-serif; color: #adafad; background: #303332; gap: 8.900px; }
.gh-tabs .cur { background: #4b4d4b; color: #fff; width: 36px; text-align: center; line-height: 14px; border-radius: 3px 3px 0 0; margin-right: -4px; flex: none; }
.ribbon { height: 61px; flex: none; padding: 1px 0 0 2px; display: flex; gap: 3.300px; background: linear-gradient(#383b3a, #303332 20px, #303332); }
.group { height: 52.500px; border: 1px solid #747674; border-radius: 3px; background: linear-gradient(#303332, #2c2e2d); display: flex; flex-direction: column; flex: none; overflow: hidden; }
.cells { display: flex; height: 42px; flex: none; padding: 1px .5px 0 0; }
.col { width: 20px; flex: none; }
.col svg { width: 20px; height: 20px; fill: none; }
.cells hr { width: 1px; height: 27px; border: 0; background: #717371; margin: 6px 3px; flex: none; }
.cap { flex: 1; background: #050505; color: #e6e6e6; font: 8px/8.500px "Liberation Sans", sans-serif; display: grid; grid-template-columns: 8px 1fr 8px; text-align: center; }
.cap span { grid-column: 2; }
.cap em { font-style: normal; color: #aaa; }
.g7, .g01, .gA { fill: #fff; text-anchor: middle; font-family: "Liberation Sans", sans-serif; font-weight: 700; font-size: 12px; }
.g01 { font-family: "Liberation Serif", serif; font-size: 9.500px; fill: #ddd; }
.gA { font-family: "Liberation Serif", serif; font-size: 13px; }
.gh-tools { height: 24px; flex: none; display: flex; align-items: center; padding-top: 2px; background: #2a2c2c; border-top: 1px solid #3b3d3c; gap: 1.700px; }
.btn { height: 14.500px; border-radius: 3px; background: #5f615f; display: grid; place-items: center; flex: none; }
.btn svg { width: 9.500px; height: 9.500px; }
.w19 { width: 18.500px; } .w23 { width: 22.500px; } .w18 { width: 18px; }
.m8 { margin-left: 6.500px; } .m7 { margin-left: 5.500px; }
.gh-tools s { width: 1px; height: 11px; background: #484a49; flex: none; margin: 0 1px; }
.gh-tools .far { margin: 0 5px; }
.zoom { width: 41px; height: 14px; background: #242626; border-radius: 2px; display: flex; align-items: center; justify-content: space-between; font-size: 9.200px; color: #e2e2e2; padding-left: 3px; flex: none; margin-right: 1px; }
.zoom svg { width: 12px; height: 13px; }
.right { margin-left: auto; display: flex; gap: 1px; align-items: center; }
.right .hot { background: #9d9d99; }
.canvas { width: 543px; height: 477px; flex: none; }
.wires path { fill: none; stroke: #4f504d; stroke-width: 1.100; }
.sl rect { fill: #e2e2e1; stroke: #858583; stroke-width: .8; }
.vi rect { fill: #aaacb9; stroke: #74757f; stroke-width: .8; }
.co rect { fill: url(#comp); stroke: #7b7b79; stroke-width: .8; }
.gh-status { flex: 1; background: #292b2b; color: #b2b3b2; font-size: 8px; line-height: 8px; padding: 3px 0 0 472px; overflow: hidden; }
```
